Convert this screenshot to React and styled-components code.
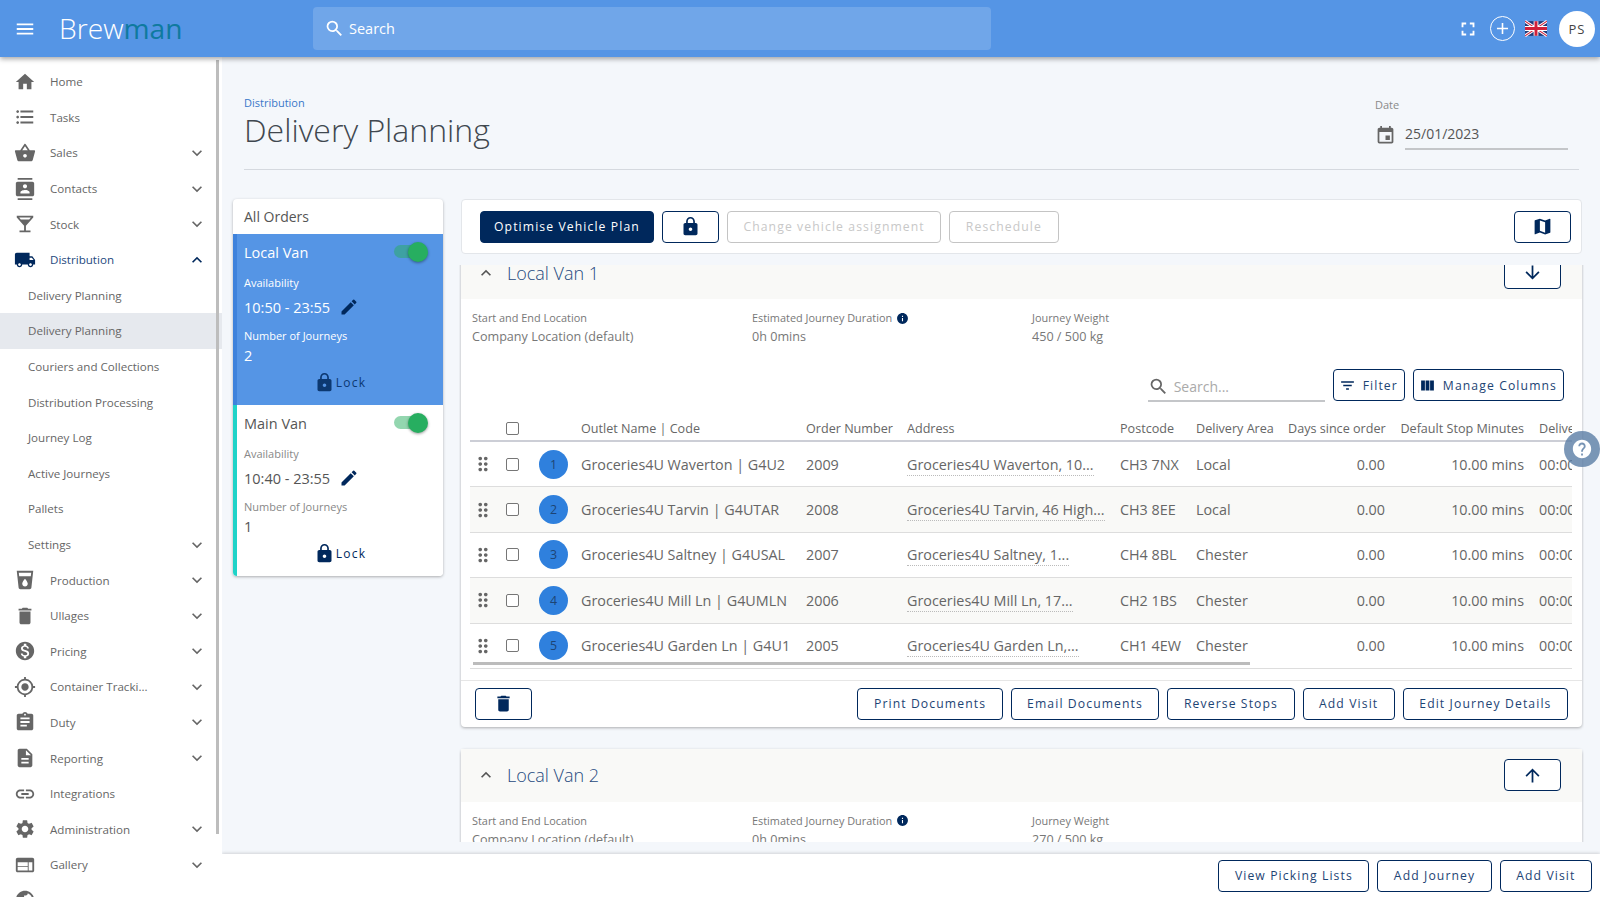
import React from 'react';
import styled, { createGlobalStyle } from 'styled-components';
import {
  MdMenu, MdSearch, MdFullscreen, MdAdd, MdHome, MdFormatListBulleted, MdShoppingBasket, MdContacts,
  MdLocalBar, MdLocalShipping, MdLocalDrink, MdDelete, MdMonetizationOn, MdGpsFixed, MdAssignment,
  MdDescription, MdLink, MdSettings, MdWeb, MdKeyboardArrowDown, MdKeyboardArrowUp, MdEvent, MdLock,
  MdEdit, MdMap, MdArrowDownward, MdArrowUpward, MdFilterList, MdViewColumn, MdDragIndicator, MdInfo,
  MdHelp, MdPublic,
} from 'react-icons/md';

const navy = '#00285c';

const GlobalStyle = createGlobalStyle`
  html, body { margin: 0; padding: 0; height: 100%; }
  body { font-family: "Open Sans", "Liberation Sans", sans-serif; background: #f4f7fb; color: #555; }
  * { box-sizing: border-box; }
`;

const Page = styled.div`
  width: 1600px;
  height: 897px;
  overflow: hidden;
  display: flex;
  flex-direction: column;
  position: relative;
`;

const TopBar = styled.header`
  height: 57px;
  flex: none;
  background: #5595e5;
  box-shadow: 0 2px 5px rgba(0, 0, 0, 0.35);
  display: flex;
  align-items: center;
  color: #fff;
  position: relative;
  z-index: 3;
`;
const MenuBtn = styled.div`
  width: 50px;
  display: flex;
  justify-content: center;
  font-size: 22px;
`;
const Logo = styled.div`
  width: 263px;
  padding-left: 9px;
  font-size: 28.2px;
  font-weight: 300;
  line-height: 1;
  white-space: nowrap;
  span { color: #0f7a9f; font-weight: 400; }
`;
const SearchBox = styled.div`
  width: 678px;
  height: 43px;
  border-radius: 4px;
  background: rgba(255, 255, 255, 0.16);
  display: flex;
  align-items: center;
  gap: 4px;
  padding-left: 11px;
  font-size: 14.5px;
  svg { font-size: 21px; }
`;
const TopActions = styled.div`
  margin-left: auto;
  display: flex;
  align-items: center;
  padding-right: 5px;
`;
const FullBtn = styled.div`
  font-size: 22px;
  display: flex;
  margin-right: 11px;
`;
const AddBtn = styled.div`
  width: 25px;
  height: 25px;
  border: 1px solid #fff;
  border-radius: 50%;
  display: flex;
  align-items: center;
  justify-content: center;
  font-size: 19px;
  margin-right: 10px;
`;
const Flag = styled.svg`
  width: 22px;
  height: 17px;
  margin-right: 12px;
  display: block;
`;
const Avatar = styled.div`
  width: 36px;
  height: 36px;
  border-radius: 50%;
  background: #fff;
  color: #444;
  font-size: 13px;
  letter-spacing: 1px;
  display: flex;
  align-items: center;
  justify-content: center;
`;

const Body = styled.div`
  flex: 1;
  display: flex;
  min-height: 0;
`;

const Sidebar = styled.nav`
  width: 222px;
  flex: none;
  background: #fff;
  padding-top: 7px;
  overflow: hidden;
  position: relative;
  z-index: 2;
`;
const SideScroll = styled.div`
  position: absolute;
  right: 3px;
  top: 3px;
  width: 3px;
  height: 774px;
  background: #bdbdbd;
`;
const NavItem = styled.div`
  height: 35.6px;
  display: flex;
  align-items: center;
  padding-left: ${(p) => (p.$sub ? '28px' : '14px')};
  padding-right: 15px;
  font-size: 11.6px;
  color: ${(p) => (p.$open ? '#1f4a80' : '#666')};
  background: ${(p) => (p.$active ? '#e6e9ee' : 'transparent')};
`;
const NavIcon = styled.span`
  width: 22px;
  margin-right: 14px;
  display: flex;
  justify-content: center;
  font-size: 22px;
  color: ${(p) => (p.$open ? navy : '#666')};
`;
const NavChevron = styled.span`
  margin-left: auto;
  display: flex;
  font-size: 20px;
  color: ${(p) => (p.$open ? navy : '#666')};
`;

const Main = styled.main`
  flex: 1;
  min-width: 0;
  display: flex;
  flex-direction: column;
`;
const Content = styled.div`
  height: 785px;
  flex: none;
  overflow: hidden;
  padding: 0 18px 0 22px;
`;
const PageHead = styled.div`
  height: 113px;
  padding-top: 38px;
  margin-right: 3px;
  border-bottom: 1px solid #d5d9df;
  display: flex;
  justify-content: space-between;
`;
const Crumb = styled.div`
  font-size: 11px;
  line-height: 15px;
  color: #3a78c9;
`;
const Title = styled.h1`
  margin: 0;
  font-size: 32px;
  line-height: 40px;
  font-weight: 300;
  color: #40474f;
`;
const DateField = styled.div`
  width: 193px;
  margin-top: 2px;
  margin-right: 11px;
`;
const DateLabel = styled.div`
  font-size: 11px;
  line-height: 15px;
  color: #8a8a8a;
`;
const DateRow = styled.div`
  display: flex;
  align-items: center;
  margin-top: 8px;
  svg { font-size: 21px; color: #666; margin-right: 9px; flex: none; }
`;
const DateValue = styled.div`
  flex: 1;
  font-size: 14px;
  height: 30px;
  line-height: 27px;
  color: #555;
  border-bottom: 2px solid #c4c6c9;
`;

const Board = styled.div`
  display: flex;
  margin: 29px 0 0 -11px;
  align-items: flex-start;
  gap: 18px;
`;

const VanList = styled.div`
  width: 210px;
  flex: none;
  background: #fff;
  border-radius: 4px;
  box-shadow: 0 1px 3px rgba(0, 0, 0, 0.3);
  overflow: hidden;
`;
const VanListHead = styled.div`
  height: 35px;
  padding-left: 11px;
  display: flex;
  align-items: center;
  font-size: 14px;
  color: #555;
`;
const VanCard = styled.div`
  height: 171px;
  padding: 7px 10px 0 7px;
  border-left: 4px solid ${(p) => (p.$selected ? '#3e82dc' : '#1fd3c8')};
  background: ${(p) => (p.$selected ? '#5595e5' : '#fff')};
  color: ${(p) => (p.$selected ? '#fff' : '#555')};
`;
const VanTop = styled.div`
  display: flex;
  align-items: center;
  justify-content: space-between;
  height: 22px;
  font-size: 14.5px;
`;
const Toggle = styled.div`
  width: 36px;
  height: 22px;
  margin-right: 5px;
  position: relative;
  &::before {
    content: '';
    position: absolute;
    left: 2px;
    top: 4px;
    width: 30px;
    height: 13px;
    border-radius: 7px;
    background: #27ae60;
    opacity: 0.5;
  }
  &::after {
    content: '';
    position: absolute;
    right: 0;
    top: 1px;
    width: 20px;
    height: 20px;
    border-radius: 50%;
    background: #27ae60;
    box-shadow: 0 1px 3px rgba(0, 0, 0, 0.4);
  }
`;
const VanLabel = styled.div`
  font-size: 11px;
  line-height: 15px;
  margin-top: ${(p) => p.$top}px;
  color: ${(p) => (p.$selected ? '#fff' : '#888')};
`;
const VanTime = styled.div`
  display: flex;
  align-items: center;
  gap: 9px;
  font-size: 14.5px;
  height: 24px;
  margin-top: 5px;
  svg { font-size: 20px; color: ${navy}; }
`;
const VanCount = styled.div`
  font-size: 14.5px;
  line-height: 20px;
  margin-top: 3px;
`;
const LockRow = styled.div`
  display: flex;
  align-items: center;
  justify-content: center;
  gap: 1px;
  padding-left: 3px;
  margin-top: 6px;
  font-size: 12px;
  letter-spacing: 1.2px;
  color: ${navy};
  opacity: ${(p) => (p.$selected ? 0.85 : 1)};
  svg { font-size: 21px; }
`;

const Plan = styled.div`
  flex: 1;
  min-width: 0;
`;
const Toolbar = styled.div`
  height: 55px;
  background: #fff;
  border: 1px solid #e3e6ea;
  border-radius: 4px;
  display: flex;
  align-items: center;
  gap: 8px;
  padding: 0 10px 0 18px;
`;
const Btn = styled.button`
  height: 32px;
  flex: none;
  padding: ${(p) => {
    if (p.$wide) return '0';
    if (p.$tool) return '0 6px 0 5px';
    if (p.$solid) return '0 13px';
    return '0 15.5px';
  }};
  width: ${(p) => (p.$wide ? '57px' : 'auto')};
  margin-left: ${(p) => (p.$push ? 'auto' : '0')};
  border: 1.5px solid ${(p) => (p.disabled ? '#c4c4c4' : navy)};
  border-radius: 4px;
  background: ${(p) => (p.$solid ? navy : '#fff')};
  color: ${(p) => (p.$solid ? '#fff' : p.disabled ? '#c8c8c8' : '#1d4474')};
  font-family: inherit;
  font-size: 12.2px;
  letter-spacing: 1.1px;
  white-space: nowrap;
  display: inline-flex;
  align-items: center;
  justify-content: center;
  gap: 7px;
  svg { font-size: ${(p) => (p.$wide ? '21px' : '17px')}; color: ${navy}; }
`;

const ScrollArea = styled.div`
  height: 588px;
  margin: 11px -2px 0;
  padding: 0 2px;
  overflow: hidden;
`;
const Panels = styled.div`
  margin-top: -19px;
  display: flex;
  flex-direction: column;
  gap: 22px;
`;
const Panel = styled.section`
  background: #fff;
  border-radius: 4px;
  box-shadow: 0 1px 3px rgba(0, 0, 0, 0.3);
`;
const PanelHead = styled.div`
  height: 53px;
  background: #f9f9f7;
  display: flex;
  align-items: center;
  padding: 0 21px 0 15px;
  font-size: 18px;
  font-weight: 300;
  color: #1f4a80;
  svg.chev { font-size: 20px; color: #555; margin-right: 11px; }
`;
const PanelInfo = styled.div`
  display: grid;
  grid-template-columns: 280px 280px 280px;
  padding: 11px 11px 0;
`;
const InfoLabel = styled.div`
  display: flex;
  align-items: center;
  gap: 4px;
  font-size: 10.9px;
  line-height: 16px;
  color: #777;
  svg { font-size: 13px; color: ${navy}; }
`;
const InfoValue = styled.div`
  font-size: 12.6px;
  line-height: 20px;
  margin-top: 1px;
  color: #777;
`;
const Tools = styled.div`
  display: flex;
  justify-content: flex-end;
  align-items: flex-start;
  gap: 8px;
  margin-top: 22px;
  padding-right: 18px;
`;
const TableSearch = styled.div`
  width: 177px;
  height: 33px;
  border-bottom: 2px solid #c4c6c9;
  display: flex;
  align-items: center;
  gap: 5px;
  font-size: 14px;
  color: #aaa;
  padding-top: 3px;
  svg { font-size: 21px; color: #666; }
`;
const TableWrap = styled.div`
  margin: 16px 10px 0 9px;
  overflow: hidden;
  position: relative;
`;
const Cols = '36px 33px 42px 225px 101px 213px 76px 92px 112px 139px 33px';
const HeadRow = styled.div`
  display: grid;
  grid-template-columns: ${Cols};
  height: 24px;
  align-items: center;
  padding-bottom: 2px;
  border-bottom: 2px solid #ccced6;
  font-size: 12.6px;
  color: #666;
  white-space: nowrap;
`;
const Row = styled.div`
  display: grid;
  grid-template-columns: ${Cols};
  height: 45.4px;
  align-items: center;
  border-bottom: 1px solid #ddd;
  background: ${(p) => (p.$alt ? '#f9f9f7' : '#fff')};
  font-size: 14.35px;
  color: #666;
  white-space: nowrap;
`;
const Cell = styled.div`
  min-width: 0;
  overflow: hidden;
  line-height: 25px;
  text-align: ${(p) => (p.$right ? 'right' : 'left')};
  padding-right: ${(p) => (p.$right ? '15px' : '0')};
`;
const Grip = styled.div`
  display: flex;
  padding-left: 2px;
  font-size: 22px;
  color: #666;
`;
const Check = styled.span`
  display: block;
  width: 13px;
  height: 13px;
  border: 1.5px solid #767676;
  border-radius: 2px;
  background: #fff;
`;
const Stop = styled.div`
  width: 29px;
  height: 29px;
  border-radius: 50%;
  background: #2f80dd;
  color: #1d4474;
  font-size: 12.4px;
  display: flex;
  align-items: center;
  justify-content: center;
`;
const Address = styled.span`
  border-bottom: 1px dotted #bbb;
  padding-bottom: 1px;
`;
const TableBar = styled.div`
  position: absolute;
  left: 3px;
  bottom: 4px;
  width: 777px;
  height: 3px;
  background: #bcbcbc;
`;
const PanelFoot = styled.div`
  display: flex;
  align-items: center;
  gap: 8px;
  height: 47px;
  margin-top: 11px;
  padding: 0 14px;
  border-top: 1px solid #e6e6e6;
`;

const BottomBar = styled.div`
  height: 43px;
  margin-top: 12px;
  flex: none;
  background: #fff;
  box-shadow: 0 -1px 3px rgba(0, 0, 0, 0.15);
  display: flex;
  justify-content: flex-end;
  align-items: center;
  gap: 8px;
  padding-right: 8px;
`;

const HelpFab = styled.div`
  position: absolute;
  left: 1564px;
  top: 431px;
  width: 36px;
  height: 36px;
  border-radius: 50%;
  background: rgba(90, 125, 165, 0.8);
  display: flex;
  align-items: center;
  justify-content: center;
  font-size: 22px;
  color: #fff;
  z-index: 4;
`;

const nav = [
  { label: 'Home', icon: MdHome },
  { label: 'Tasks', icon: MdFormatListBulleted },
  { label: 'Sales', icon: MdShoppingBasket, more: true },
  { label: 'Contacts', icon: MdContacts, more: true },
  { label: 'Stock', icon: MdLocalBar, more: true },
  { label: 'Distribution', icon: MdLocalShipping, more: true, open: true },
  { label: 'Delivery Planning', sub: true },
  { label: 'Delivery Planning', sub: true, active: true },
  { label: 'Couriers and Collections', sub: true },
  { label: 'Distribution Processing', sub: true },
  { label: 'Journey Log', sub: true },
  { label: 'Active Journeys', sub: true },
  { label: 'Pallets', sub: true },
  { label: 'Settings', sub: true, more: true },
  { label: 'Production', icon: MdLocalDrink, more: true },
  { label: 'Ullages', icon: MdDelete, more: true },
  { label: 'Pricing', icon: MdMonetizationOn, more: true },
  { label: 'Container Tracki...', icon: MdGpsFixed, more: true },
  { label: 'Duty', icon: MdAssignment, more: true },
  { label: 'Reporting', icon: MdDescription, more: true },
  { label: 'Integrations', icon: MdLink },
  { label: 'Administration', icon: MdSettings, more: true },
  { label: 'Gallery', icon: MdWeb, more: true },
  { label: 'Saved Lists', icon: MdPublic, more: true },
];

const vans = [
  { name: 'Local Van', time: '10:50 - 23:55', count: 2, selected: true },
  { name: 'Main Van', time: '10:40 - 23:55', count: 1 },
];

const rows = [
  ['Groceries4U Waverton | G4U2', '2009', 'Groceries4U Waverton, 10...', 'CH3 7NX', 'Local'],
  ['Groceries4U Tarvin | G4UTAR', '2008', 'Groceries4U Tarvin, 46 High...', 'CH3 8EE', 'Local'],
  ['Groceries4U Saltney | G4USAL', '2007', 'Groceries4U Saltney, 1...', 'CH4 8BL', 'Chester'],
  ['Groceries4U Mill Ln | G4UMLN', '2006', 'Groceries4U Mill Ln, 17...', 'CH2 1BS', 'Chester'],
  ['Groceries4U Garden Ln | G4U1', '2005', 'Groceries4U Garden Ln,...', 'CH1 4EW', 'Chester'],
];

function JourneyInfo({ weight }) {
  return (
    <PanelInfo>
      <div>
        <InfoLabel>Start and End Location</InfoLabel>
        <InfoValue>Company Location (default)</InfoValue>
      </div>
      <div>
        <InfoLabel>Estimated Journey Duration <MdInfo /></InfoLabel>
        <InfoValue>0h 0mins</InfoValue>
      </div>
      <div>
        <InfoLabel>Journey Weight</InfoLabel>
        <InfoValue>{weight}</InfoValue>
      </div>
    </PanelInfo>
  );
}

export default function App() {
  return (
    <Page>
      <GlobalStyle />
      <TopBar>
        <MenuBtn><MdMenu /></MenuBtn>
        <Logo>Brew<span>man</span></Logo>
        <SearchBox><MdSearch />Search</SearchBox>
        <TopActions>
          <FullBtn><MdFullscreen /></FullBtn>
          <AddBtn><MdAdd /></AddBtn>
          <Flag viewBox="0 0 60 40">
            <rect width="60" height="40" fill="#1f3a7a" />
            <path d="M0 0L60 40M60 0L0 40" stroke="#fff" strokeWidth="8" />
            <path d="M0 0L60 40M60 0L0 40" stroke="#d0213a" strokeWidth="3" />
            <path d="M30 0V40M0 20H60" stroke="#fff" strokeWidth="13" />
            <path d="M30 0V40M0 20H60" stroke="#d0213a" strokeWidth="8" />
          </Flag>
          <Avatar>PS</Avatar>
        </TopActions>
      </TopBar>
      <Body>
        <Sidebar>
          <SideScroll />
          {nav.map((item, i) => (
            <NavItem key={i} $sub={item.sub} $active={item.active} $open={item.open}>
              {item.icon && <NavIcon $open={item.open}><item.icon /></NavIcon>}
              {item.label}
              {item.more && (
                <NavChevron $open={item.open}>
                  {item.open ? <MdKeyboardArrowUp /> : <MdKeyboardArrowDown />}
                </NavChevron>
              )}
            </NavItem>
          ))}
        </Sidebar>
        <Main>
          <Content>
            <PageHead>
              <div>
                <Crumb>Distribution</Crumb>
                <Title>Delivery Planning</Title>
              </div>
              <DateField>
                <DateLabel>Date</DateLabel>
                <DateRow><MdEvent /><DateValue>25/01/2023</DateValue></DateRow>
              </DateField>
            </PageHead>
            <Board>
              <VanList>
                <VanListHead>All Orders</VanListHead>
                {vans.map((van) => (
                  <VanCard key={van.name} $selected={van.selected}>
                    <VanTop>{van.name}<Toggle /></VanTop>
                    <VanLabel $top={12} $selected={van.selected}>Availability</VanLabel>
                    <VanTime>{van.time}<MdEdit /></VanTime>
                    <VanLabel $top={9} $selected={van.selected}>Number of Journeys</VanLabel>
                    <VanCount>{van.count}</VanCount>
                    <LockRow $selected={van.selected}><MdLock />Lock</LockRow>
                  </VanCard>
                ))}
              </VanList>
              <Plan>
                <Toolbar>
                  <Btn $solid>Optimise Vehicle Plan</Btn>
                  <Btn $wide><MdLock /></Btn>
                  <Btn disabled>Change vehicle assignment</Btn>
                  <Btn disabled>Reschedule</Btn>
                  <Btn $wide $push><MdMap /></Btn>
                </Toolbar>
                <ScrollArea>
                  <Panels>
                    <Panel>
                      <PanelHead>
                        <MdKeyboardArrowUp className="chev" />
                        Local Van 1
                        <Btn $wide $push><MdArrowDownward /></Btn>
                      </PanelHead>
                      <JourneyInfo weight="450 / 500 kg" />
                      <Tools>
                        <TableSearch><MdSearch />Search...</TableSearch>
                        <Btn $tool><MdFilterList />Filter</Btn>
                        <Btn $tool><MdViewColumn />Manage Columns</Btn>
                      </Tools>
                      <TableWrap>
                        <HeadRow>
                          <span />
                          <Check />
                          <span />
                          <Cell>Outlet Name | Code</Cell>
                          <Cell>Order Number</Cell>
                          <Cell>Address</Cell>
                          <Cell>Postcode</Cell>
                          <Cell>Delivery Area</Cell>
                          <Cell $right>Days since order</Cell>
                          <Cell $right>Default Stop Minutes</Cell>
                          <Cell>Delivered</Cell>
                        </HeadRow>
                        {rows.map((row, i) => (
                          <Row key={row[1]} $alt={i % 2 === 1}>
                            <Grip><MdDragIndicator /></Grip>
                            <Check />
                            <Stop>{i + 1}</Stop>
                            <Cell>{row[0]}</Cell>
                            <Cell>{row[1]}</Cell>
                            <Cell><Address>{row[2]}</Address></Cell>
                            <Cell>{row[3]}</Cell>
                            <Cell>{row[4]}</Cell>
                            <Cell $right>0.00</Cell>
                            <Cell $right>10.00 mins</Cell>
                            <Cell>00:00</Cell>
                          </Row>
                        ))}
                        <TableBar />
                      </TableWrap>
                      <PanelFoot>
                        <Btn $wide><MdDelete /></Btn>
                        <Btn $push>Print Documents</Btn>
                        <Btn>Email Documents</Btn>
                        <Btn>Reverse Stops</Btn>
                        <Btn>Add Visit</Btn>
                        <Btn>Edit Journey Details</Btn>
                      </PanelFoot>
                    </Panel>
                    <Panel>
                      <PanelHead>
                        <MdKeyboardArrowUp className="chev" />
                        Local Van 2
                        <Btn $wide $push><MdArrowUpward /></Btn>
                      </PanelHead>
                      <JourneyInfo weight="270 / 500 kg" />
                    </Panel>
                  </Panels>
                </ScrollArea>
              </Plan>
            </Board>
          </Content>
          <BottomBar>
            <Btn>View Picking Lists</Btn>
            <Btn>Add Journey</Btn>
            <Btn>Add Visit</Btn>
          </BottomBar>
        </Main>
      </Body>
      <HelpFab><MdHelp /></HelpFab>
    </Page>
  );
}
